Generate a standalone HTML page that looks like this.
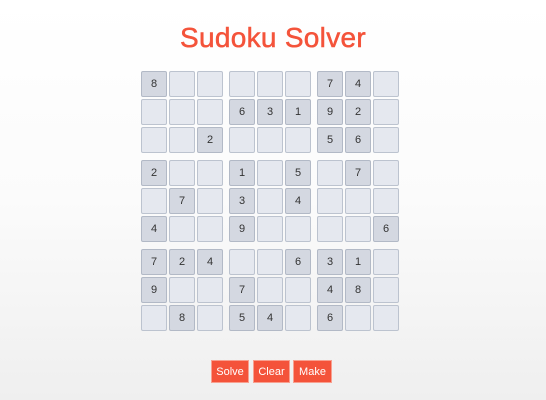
<!DOCTYPE html>
<html><head><style>
html,body{margin:0;padding:0}
body{width:546px;height:400px;position:relative;overflow:hidden;background:linear-gradient(#ffffff 0%,#fbfbfb 50%,#efefef 100%);font-family:"Liberation Sans",sans-serif}
h1{position:absolute;top:22px;left:0;width:546px;text-align:center;margin:0;font-size:28px;font-weight:normal;color:#f4533a;-webkit-text-stroke:0.5px #f4533a;letter-spacing:0.3px}
.c{position:absolute;width:24px;height:24px;border:1px solid #bcc3cf;border-radius:2px;background:#e5e8ef;font-size:11px;color:#333;text-align:center;line-height:24px}
.f{background:#d4d8e1;border-color:#b2b9c6}
.a{left:141px}.b{left:169px}.d{left:197px}.e{left:229px}.g{left:257px}.h{left:285px}.i{left:317px}.j{left:345px}.k{left:373px}
.r1{top:71px}.r2{top:99px}.r3{top:127px}.r4{top:160px}.r5{top:188px}.r6{top:216px}.r7{top:249px}.r8{top:277px}.r9{top:305px}
.btn{position:absolute;top:360px;height:23px;background:#f4533a;color:#fff;font-size:11px;line-height:23px;text-align:center;border:1px solid #f8a090;box-sizing:border-box}
</style></head><body>
<h1>Sudoku Solver</h1>
<div id="g"></div>
<div class="btn" style="left:211px;width:38px">Solve</div>
<div class="btn" style="left:253px;width:37px">Clear</div>
<div class="btn" style="left:293px;width:39px">Make</div>
<script>
var rows=["8.....74.","...631 92.".replace(' ',''),"..2...56.","2..1.5.7.",".7.3.4...","4..9....6","724..631.","9..7..48.",".8.54.6.."];
var cols="abdeghijk";var h="";
for(var r=0;r<9;r++)for(var c=0;c<9;c++){var v=rows[r][c];h+='<div class="c '+cols[c]+' r'+(r+1)+(v!='.'?' f':'')+'">'+(v!='.'?v:'')+'</div>';}
document.getElementById('g').innerHTML=h;
</script>
</body></html>
